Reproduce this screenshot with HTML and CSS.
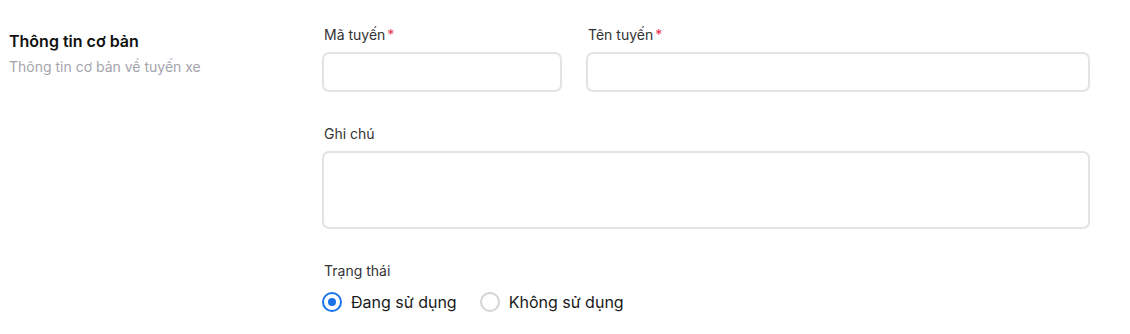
FILE: index.html
```html
<!DOCTYPE html>
<html lang="vi">
<head>
    <meta charset="UTF-8">
    <meta name="viewport" content="width=device-width, initial-scale=1.0">
    <title>Thông tin tuyến xe</title>
    <link rel="stylesheet" href="styles.css">
</head>
<body>
    <div class="section">
        <div class="section-info">
            <h2>Thông tin cơ bản</h2>
            <p>Thông tin cơ bản về tuyến xe</p>
        </div>

        <div class="section-form">
            <div class="form-row two-cols">
                <div class="form-group">
                    <label for="routeCode">Mã tuyến<span class="required">*</span></label>
                    <input type="text" id="routeCode">
                </div>
                <div class="form-group">
                    <label for="routeName">Tên tuyến<span class="required">*</span></label>
                    <input type="text" id="routeName">
                </div>
            </div>

            <div class="form-group">
                <label for="note">Ghi chú</label>
                <textarea id="note"></textarea>
            </div>

            <div class="form-group">
                <label>Trạng thái</label>
                <div class="radio-group">
                    <label class="radio">
                        <input type="radio" name="status" checked>
                        <span class="dot"></span>
                        Đang sử dụng
                    </label>
                    <label class="radio">
                        <input type="radio" name="status">
                        <span class="dot"></span>
                        Không sử dụng
                    </label>
                </div>
            </div>
        </div>
    </div>
</body>
</html>
```

FILE: styles.css
```css
body {
    font-family: Inter, "Noto Sans", sans-serif;
    margin: 0;
    background-color: #fff;
    color: #1f1f1f;
}
.section {
    display: flex;
    padding: 25px 0 0 9px;
}
.section-info {
    width: 313px;
    flex-shrink: 0;
}
.section-info h2 {
    margin: 6px 0 0;
    font-size: 16px;
    font-weight: 600;
    line-height: 20px;
    color: #111;
}
.section-info p {
    margin: 6px 0 0;
    font-size: 14px;
    line-height: 20px;
    color: #a4a4ad;
}
.section-form {
    width: 768px;
    display: flex;
    flex-direction: column;
    gap: 32px;
}
.two-cols {
    display: grid;
    grid-template-columns: 240px 1fr;
    gap: 24px;
}
.form-group > label {
    display: block;
    font-size: 14px;
    line-height: 20px;
    color: #333;
    margin: 0 0 7px 2px;
}
.required {
    color: #e8344e;
    margin-left: 2px;
}
input[type="text"],
textarea {
    display: block;
    width: 100%;
    height: 40px;
    border: 2px solid #e3e3e3;
    border-radius: 7px;
    box-sizing: border-box;
    font-family: inherit;
    font-size: 14px;
    padding: 8px 12px;
    outline: none;
}
textarea {
    height: 78px;
    resize: none;
}
.radio-group {
    display: flex;
    gap: 23px;
    margin-top: 10px;
}
.radio {
    display: flex;
    align-items: center;
    gap: 9px;
    font-size: 16px;
    line-height: 22px;
    color: #1a1a1a;
    cursor: pointer;
}
.radio input {
    display: none;
}
.dot {
    width: 20px;
    height: 20px;
    border: 2px solid #d4d4d4;
    border-radius: 50%;
    box-sizing: border-box;
    display: flex;
    align-items: center;
    justify-content: center;
}
.radio input:checked + .dot {
    border-color: #1a73e8;
}
.radio input:checked + .dot::after {
    content: "";
    width: 8px;
    height: 8px;
    border-radius: 50%;
    background-color: #1a73e8;
}
```
